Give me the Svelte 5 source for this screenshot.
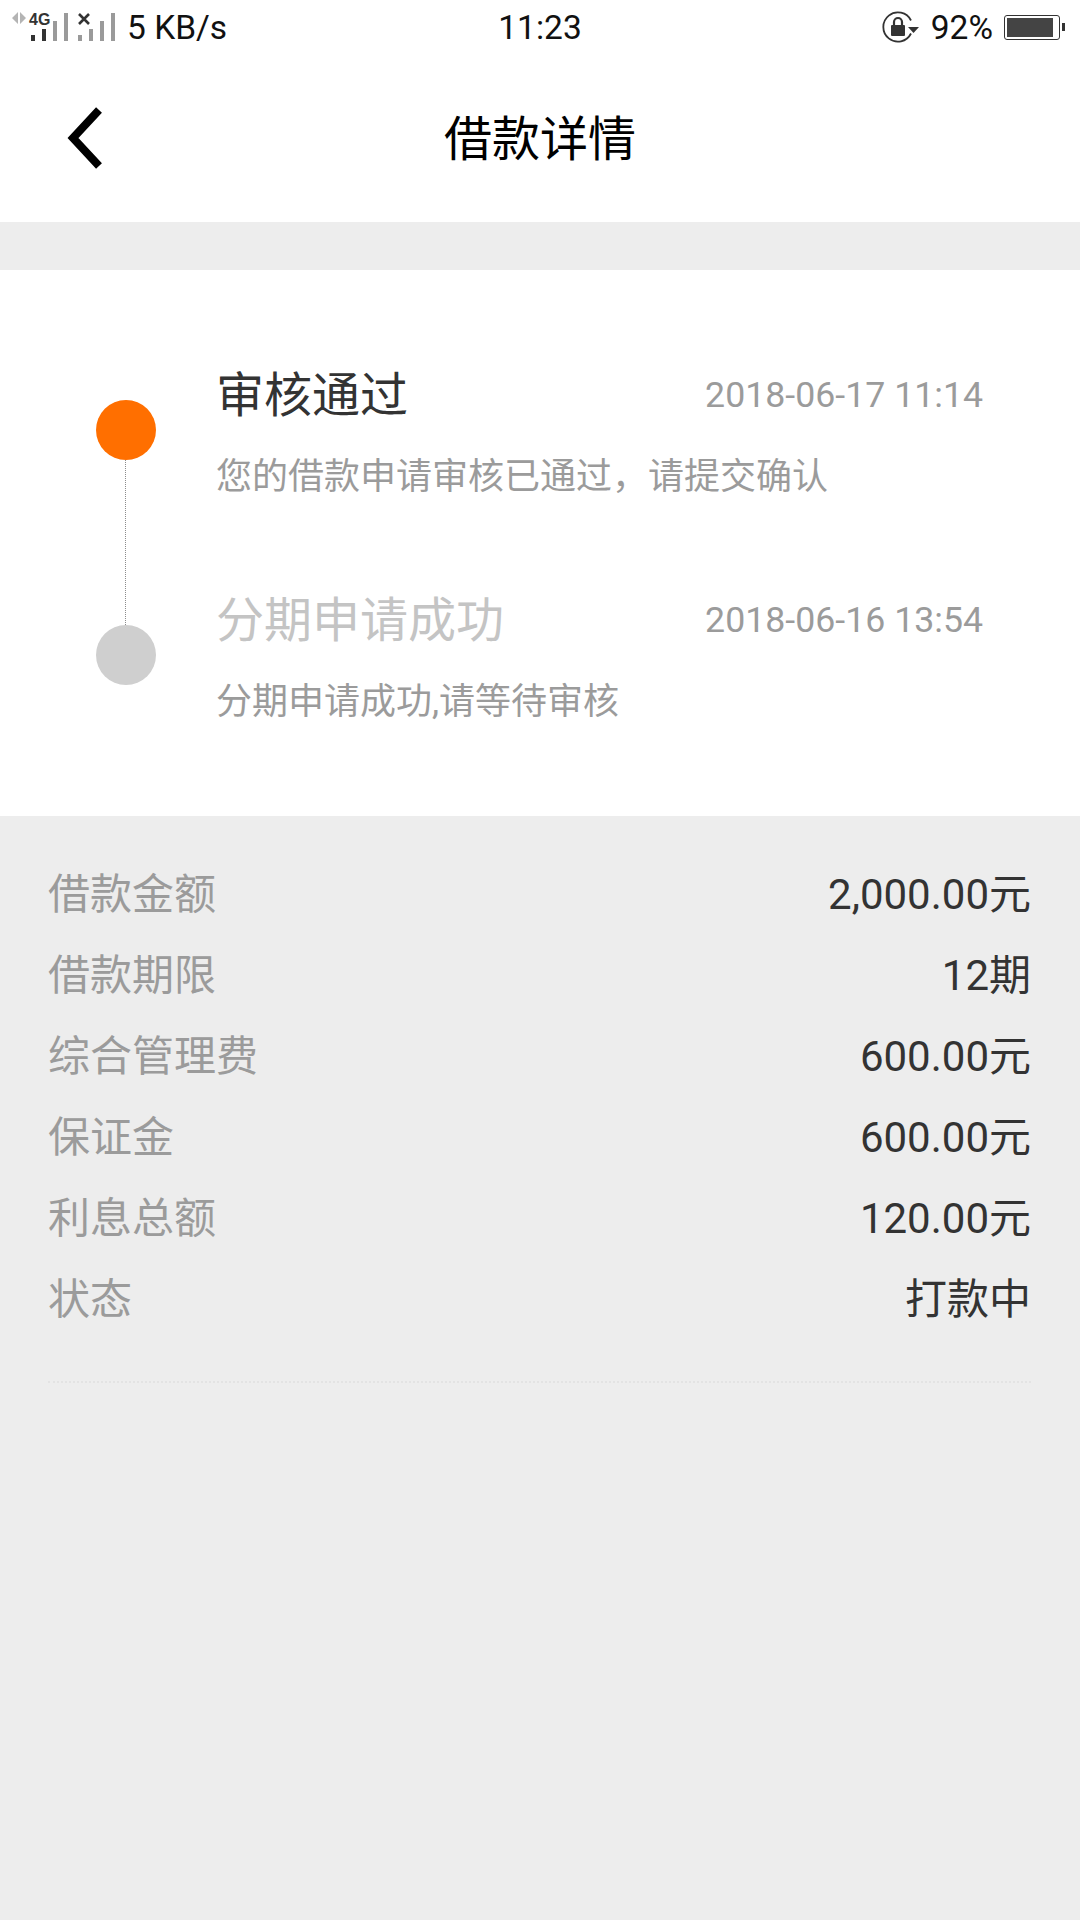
<script lang="ts">
  const steps = [
    { title: '审核通过', time: '2018-06-17 11:14', desc: '您的借款申请审核已通过，请提交确认', active: true },
    { title: '分期申请成功', time: '2018-06-16 13:54', desc: '分期申请成功,请等待审核', active: false }
  ];

  const details = [
    { label: '借款金额', value: '2,000.00元' },
    { label: '借款期限', value: '12期' },
    { label: '综合管理费', value: '600.00元' },
    { label: '保证金', value: '600.00元' },
    { label: '利息总额', value: '120.00元' },
    { label: '状态', value: '打款中' }
  ];
</script>

<div class="page">
  <div class="status-bar">
    <div class="status-left">
      <svg class="signal" viewBox="0 0 120 54" width="120" height="54" aria-hidden="true">
        <path d="M18 12v12l-6-6zM20 12l6 6-6 6z" fill="#b4b4b4"/>
        <text x="29" y="25" class="net">4G</text>
        <rect x="31" y="35" width="4" height="6" fill="#333"/>
        <rect x="42" y="29" width="4" height="12" fill="#333"/>
        <rect x="53" y="21" width="4" height="20" fill="#9a9a9a"/>
        <rect x="64" y="13" width="4" height="28" fill="#9a9a9a"/>
        <path d="M79 14l10 10M89 14L79 24" stroke="#333" stroke-width="2.6" fill="none"/>
        <rect x="78" y="35" width="4" height="6" fill="#9a9a9a"/>
        <rect x="89" y="29" width="4" height="12" fill="#9a9a9a"/>
        <rect x="100" y="21" width="4" height="20" fill="#9a9a9a"/>
        <rect x="111" y="13" width="4" height="28" fill="#9a9a9a"/>
      </svg>
      <span class="speed">5 KB/s</span>
    </div>
    <span class="clock">11:23</span>
    <div class="status-right">
      <svg viewBox="0 0 37 32" width="37" height="32" aria-hidden="true">
        <path d="M29 22.5A14.6 14.6 0 1 1 29 9.5" fill="none" stroke="#333" stroke-width="1.8"/>
        <path d="M26 16h11l-5.5 6z" fill="#333"/>
        <rect x="9" y="14" width="14" height="11" rx="1" fill="#333"/>
        <path d="M12 14v-3a4 4 0 0 1 8 0v3" fill="none" stroke="#333" stroke-width="2.2"/>
      </svg>
      <span class="percent">92%</span>
      <div class="battery"><div class="battery-fill"></div></div>
    </div>
  </div>

  <header class="nav">
    <svg class="back" viewBox="0 0 40 66" width="40" height="66" aria-hidden="true">
      <path d="M35 5L9 33l26 28" fill="none" stroke="#000" stroke-width="8"/>
    </svg>
    <h1>借款详情</h1>
  </header>

  <section class="timeline">
    {#each steps as step, i}
      <div class="step">
        <div class="dot" class:on={step.active}>
          {#if i < steps.length - 1}<span class="connector"></span>{/if}
        </div>
        <div class="content">
          <div class="head">
            <span class="title" class:on={step.active}>{step.title}</span>
            <span class="time">{step.time}</span>
          </div>
          <p class="desc">{step.desc}</p>
        </div>
      </div>
    {/each}
  </section>

  <section class="details">
    {#each details as row}
      <div class="row">
        <span class="label">{row.label}</span>
        <span class="value">{row.value}</span>
      </div>
    {/each}
    <div class="rule"></div>
  </section>
</div>

<style>
  :global(body) {
    margin: 0;
    background: #ededed;
  }

  .page {
    min-height: 1920px;
    background: #ededed;
    font-family: Roboto, "Noto Sans CJK SC", sans-serif;
  }

  .status-bar {
    height: 54px;
    display: grid;
    grid-template-columns: 1fr auto 1fr;
    align-items: center;
    background: #fff;
    color: #111;
    font-size: 33.5px;
  }

  .status-left {
    display: flex;
    align-items: center;
  }

  .signal {
    flex-shrink: 0;
  }

  .net {
    font-family: "Liberation Sans", sans-serif;
    font-size: 16px;
    font-weight: 700;
    fill: #333;
  }

  .speed {
    margin-left: 7px;
  }

  .status-right {
    display: flex;
    align-items: center;
    justify-content: flex-end;
    padding-right: 20px;
  }

  .percent {
    margin-left: 12px;
  }

  .battery {
    position: relative;
    width: 56px;
    height: 25px;
    margin-left: 11px;
    padding: 2px;
    box-sizing: border-box;
    border: 1.5px solid #333;
    border-radius: 3px;
  }

  .battery::after {
    content: '';
    position: absolute;
    right: -6px;
    top: 7px;
    width: 3px;
    height: 8px;
    background: #333;
  }

  .battery-fill {
    width: 92%;
    height: 100%;
    background: #444;
  }

  .nav {
    position: relative;
    height: 168px;
    display: flex;
    align-items: center;
    justify-content: center;
    background: #fff;
  }

  .back {
    position: absolute;
    left: 64px;
    top: 51px;
  }

  h1 {
    margin: 0;
    font-size: 48px;
    font-weight: 400;
    line-height: 60px;
    color: #000;
    padding-top: 4px;
  }

  .timeline {
    display: flex;
    flex-direction: column;
    gap: 87px;
    margin-top: 48px;
    padding: 94px 97px 89px 96px;
    background: #fff;
  }

  .step {
    display: flex;
  }

  .dot {
    position: relative;
    flex-shrink: 0;
    width: 60px;
    height: 60px;
    margin-top: 36px;
    border-radius: 50%;
    background: #cfcfcf;
  }

  .dot.on {
    background: #ff6f00;
  }

  .connector {
    position: absolute;
    left: 29px;
    top: 60px;
    height: 165px;
    border-left: 1px dotted #8c8c8c;
  }

  .content {
    flex: 1;
    margin-left: 60px;
  }

  .head {
    display: flex;
    align-items: flex-start;
    justify-content: space-between;
    height: 60px;
  }

  .title {
    font-size: 48px;
    line-height: 64px;
    color: #c4c4c4;
  }

  .title.on {
    color: #333;
  }

  .time {
    font-size: 35.7px;
    line-height: 62px;
    color: #9b9b9b;
  }

  .desc {
    margin: 28px 0 0;
    font-size: 36px;
    line-height: 50px;
    color: #9b9b9b;
  }

  .details {
    padding: 34px 49px 0 48px;
  }

  .row {
    display: flex;
    align-items: center;
    justify-content: space-between;
    height: 81px;
    font-size: 42px;
  }

  .label {
    color: #9b9b9b;
  }

  .value {
    color: #333;
  }

  .rule {
    margin-top: 45px;
    border-top: 2px dotted #e3e3e3;
  }
</style>
